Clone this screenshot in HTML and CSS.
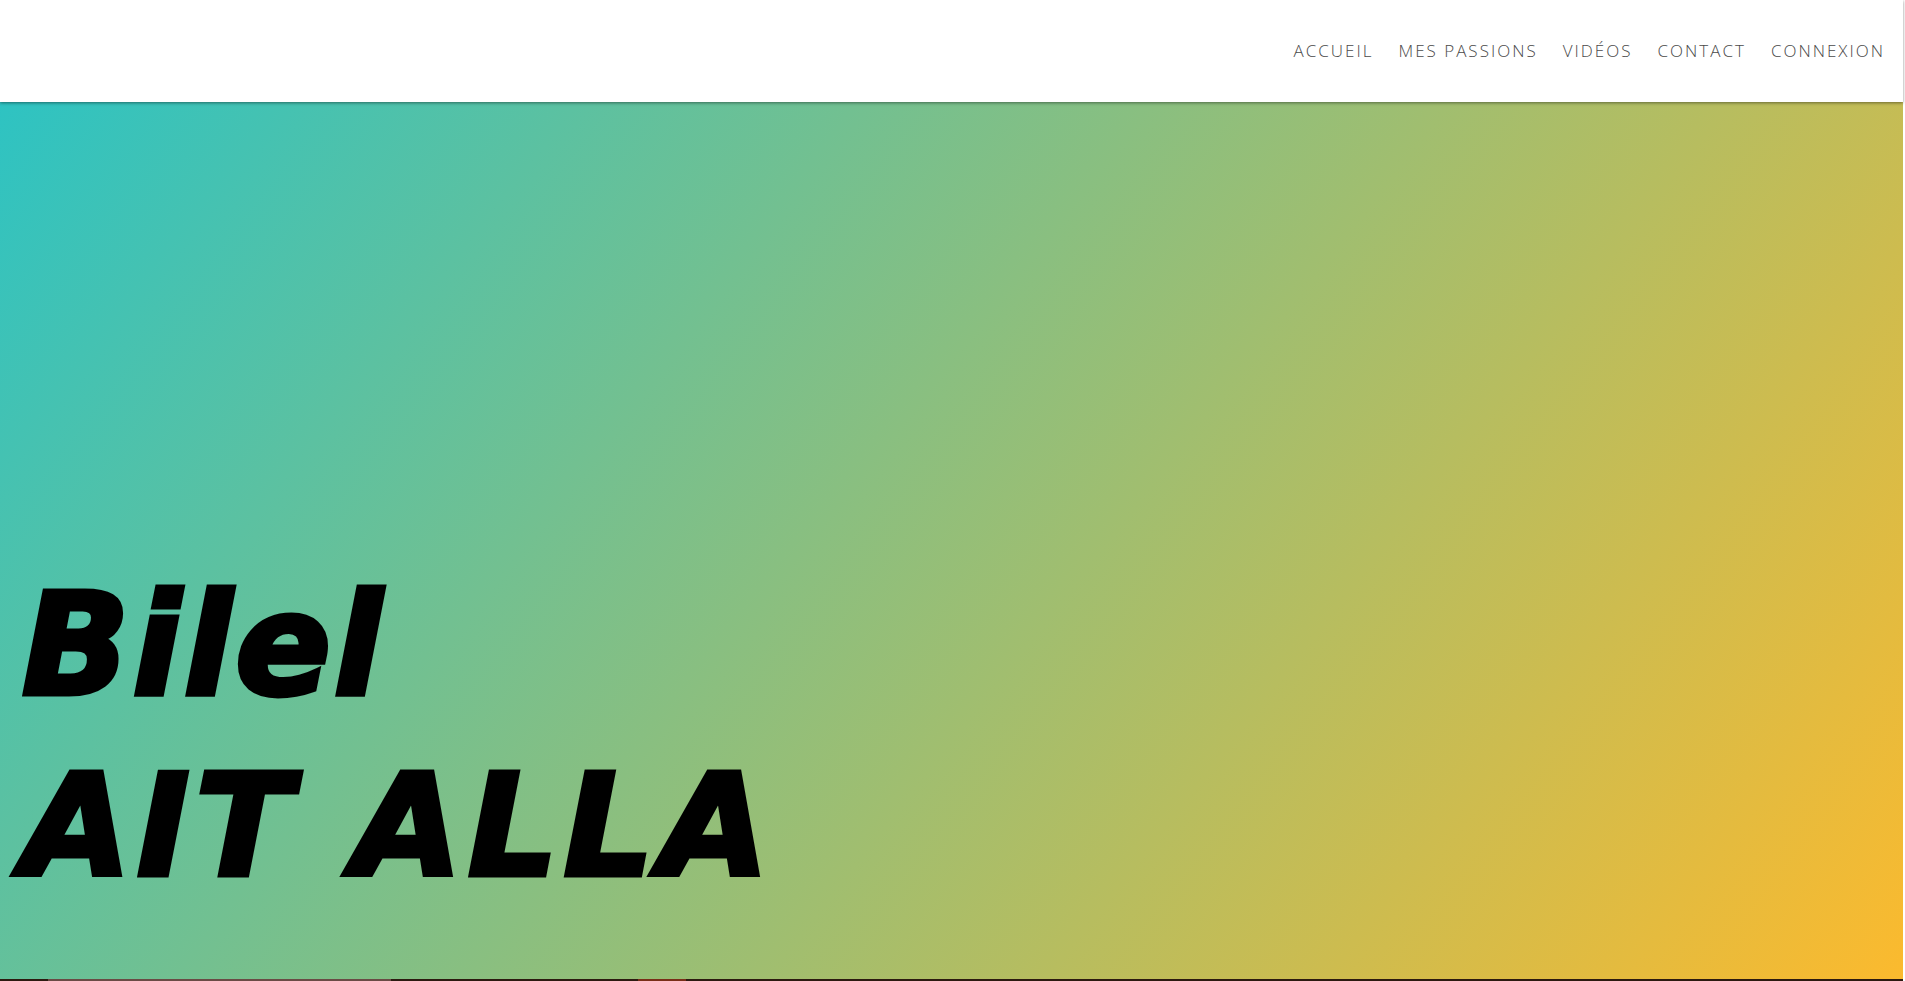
FILE: index.html
```
<!DOCTYPE html>
<html lang="fr">
<head>
<meta charset="utf-8">
<title>Bilel AIT ALLA</title>
<link rel="stylesheet" href="styles.css">
</head>
<body>
<div class="page">
  <header class="site-header">
    <nav class="main-nav">
      <a href="#" class="nav-link">ACCUEIL</a>
      <a href="#" class="nav-link">MES PASSIONS</a>
      <a href="#" class="nav-link">VIDÉOS</a>
      <a href="#" class="nav-link">CONTACT</a>
      <a href="#" class="nav-link">CONNEXION</a>
    </nav>
  </header>
  <section class="hero">
    <h1 class="hero-title"><span class="line line-first">Bilel</span><span class="line">AIT ALLA</span></h1>
  </section>
  <section class="next">
    <div class="photo photo-a"></div>
    <div class="photo photo-b"></div>
  </section>
</div>
</body>
</html>
```
FILE: styles.css
```
html, body {
  margin: 0;
  padding: 0;
  background: #ffffff;
  overflow: hidden;
}
.page {
  margin-right: 2px;
  font-family: "Open Sans", "Liberation Sans", sans-serif;
}
.site-header {
  height: 102px;
  box-sizing: border-box;
  background: #ffffff;
  display: flex;
  align-items: center;
  justify-content: flex-end;
  padding: 0 18px 2px 0;
  position: relative;
  z-index: 2;
  box-shadow: 0 1px 3px rgba(0, 0, 0, 0.45);
}
.main-nav {
  display: flex;
  gap: 25px;
}
.nav-link {
  color: #4a4a4a;
  text-decoration: none;
  font-size: 17px;
  font-weight: 300;
  letter-spacing: 2px;
}
.hero {
  height: 877px;
  box-sizing: border-box;
  background: linear-gradient(128deg, #2ec3c2 0%, #fbba2e 100%);
  display: flex;
  flex-direction: column;
  justify-content: flex-end;
  padding: 0 0 62px 22px;
}
.hero-title {
  margin: 0;
  font-family: "DejaVu Sans", sans-serif;
  font-weight: 700;
  font-style: italic;
  font-size: 141px;
  line-height: 181px;
  color: #000000;
  -webkit-text-stroke: 5px #000000;
  letter-spacing: 6px;
}
.line {
  display: block;
}
.line-first {
  letter-spacing: 3px;
}
.next {
  height: 200px;
  background: #2c1a10;
  display: flex;
  gap: 247px;
  padding-left: 48px;
}
.photo {
  height: 200px;
}
.photo-a {
  width: 343px;
  background: #6a4b45;
}
.photo-b {
  width: 48px;
  background: #7a2e18;
}
```
